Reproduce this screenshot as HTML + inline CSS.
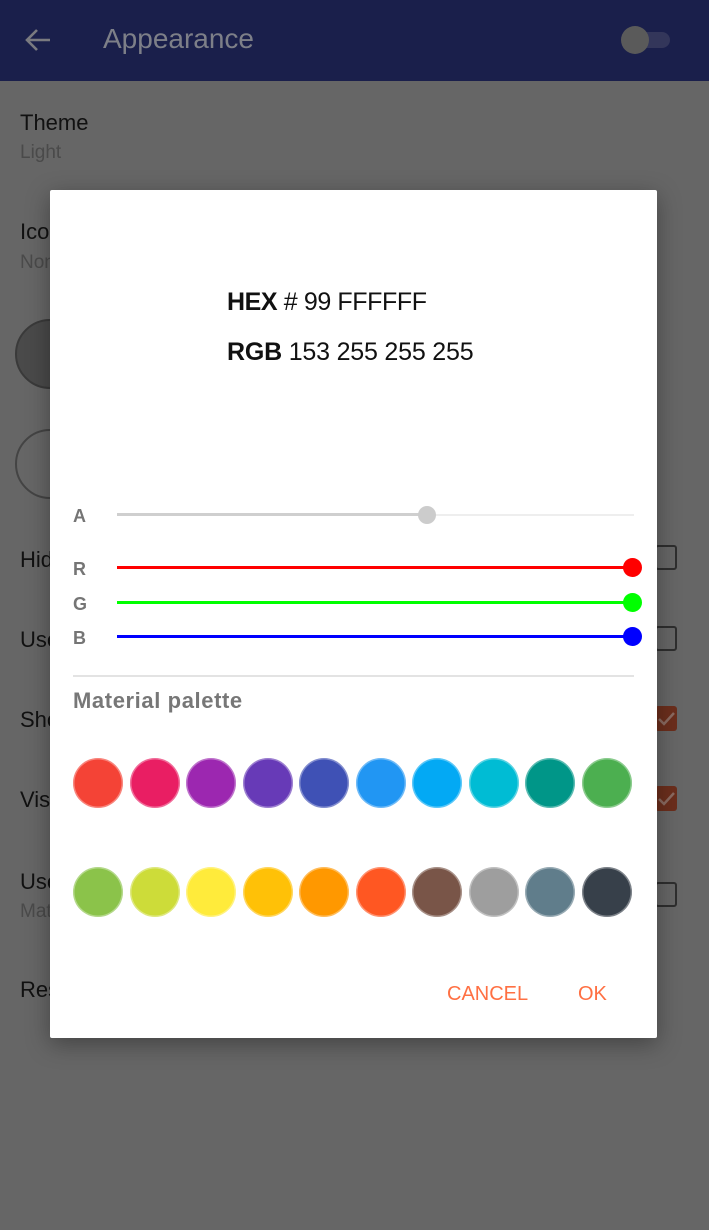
<!DOCTYPE html>
<html><head><style>
*{margin:0;padding:0;box-sizing:border-box}
body{width:709px;height:1230px;background:#666;position:relative;overflow:hidden;font-family:"Liberation Sans",sans-serif}
.a{position:absolute;white-space:nowrap}
.bg{color:#111;font-size:22px}
.sub{color:#4a4a4a;font-size:19px}
.cb{position:absolute;left:655px;width:22px;height:25px;border:2.5px solid #2e2e2e;border-radius:3px}
.cbo{position:absolute;left:655px;width:22px;height:25px;background:#6b2e1c;border-radius:3px}
.lbl{color:#757575;font-size:18px;font-weight:bold}
.dot{position:absolute;width:50px;height:50px;border-radius:50%;box-shadow:inset 0 0 0 1.5px rgba(255,255,255,.35)}
</style></head><body>
<div class="a" style="left:0;top:0;width:709px;height:81px;background:#1a1f4b"></div>
<svg class="a" style="left:24px;top:27px" width="28" height="28" viewBox="0 0 28 28"><path d="M26 13H4M13 3L3 13l10 10" stroke="#7a7a80" stroke-width="2.6" fill="none"/></svg>
<div class="a" style="left:103px;top:23px;font-size:28px;color:#7d7f88">Appearance</div>
<div class="a" style="left:628px;top:32px;width:42px;height:16px;border-radius:8px;background:#33365a"></div>
<div class="a" style="left:621px;top:26px;width:28px;height:28px;border-radius:50%;background:#5a5a5a"></div>

<div class="a bg" style="left:20px;top:110px">Theme</div>
<div class="a sub" style="left:20px;top:142px">Light</div>
<div class="a bg" style="left:20px;top:219px">Icon</div>
<div class="a sub" style="left:20px;top:252px">None</div>
<div class="a" style="left:15px;top:319px;width:70px;height:70px;border-radius:50%;background:#4a4a4a;border:2px solid #3a3a3a"></div>
<div class="a" style="left:15px;top:429px;width:70px;height:70px;border-radius:50%;border:2px solid #444"></div>
<div class="a bg" style="left:20px;top:547px">Hide</div>
<div class="a bg" style="left:20px;top:627px">Use</div>
<div class="a bg" style="left:20px;top:707px">Show</div>
<div class="a bg" style="left:20px;top:787px">Visible</div>
<div class="a bg" style="left:20px;top:869px">Use</div>
<div class="a sub" style="left:20px;top:901px">Material</div>
<div class="a bg" style="left:20px;top:977px">Reset</div>
<div class="cb" style="top:545px"></div>
<div class="cb" style="top:626px"></div>
<div class="cbo" style="top:706px"><svg width="22" height="25"><path d="M4 13l5 5 10-11" stroke="#8a6a60" stroke-width="2.5" fill="none"/></svg></div>
<div class="cbo" style="top:786px"><svg width="22" height="25"><path d="M4 13l5 5 10-11" stroke="#8a6a60" stroke-width="2.5" fill="none"/></svg></div>
<div class="cb" style="top:882px"></div>

<div class="a" style="left:50px;top:190px;width:607px;height:848px;background:#fff;border-radius:2px;box-shadow:0 6px 24px rgba(0,0,0,.35)"></div>
<div class="a" style="left:227px;top:288px;font-size:25px;color:#111;letter-spacing:-0.4px"><b>HEX</b> # 99 FFFFFF</div>
<div class="a" style="left:227px;top:338px;font-size:25px;color:#111;letter-spacing:-0.2px"><b>RGB</b> 153 255 255 255</div>

<div class="a lbl" style="left:73px;top:506px">A</div>
<div class="a" style="left:117px;top:513px;width:310px;height:3px;background:#cfcfcf"></div>
<div class="a" style="left:427px;top:514px;width:207px;height:2px;background:#eee"></div>
<div class="a" style="left:418px;top:506px;width:18px;height:18px;border-radius:50%;background:#ccc"></div>
<div class="a lbl" style="left:73px;top:559px">R</div>
<div class="a" style="left:117px;top:566px;width:515px;height:3px;background:#f00"></div>
<div class="a" style="left:623px;top:558px;width:19px;height:19px;border-radius:50%;background:#f00"></div>
<div class="a lbl" style="left:73px;top:594px">G</div>
<div class="a" style="left:117px;top:601px;width:515px;height:3px;background:#0f0"></div>
<div class="a" style="left:623px;top:593px;width:19px;height:19px;border-radius:50%;background:#0f0"></div>
<div class="a lbl" style="left:73px;top:628px">B</div>
<div class="a" style="left:117px;top:635px;width:515px;height:3px;background:#00f"></div>
<div class="a" style="left:623px;top:627px;width:19px;height:19px;border-radius:50%;background:#00f"></div>
<div class="a" style="left:73px;top:675px;width:561px;height:2px;background:#e3e3e3"></div>
<div class="a" style="left:73px;top:688px;font-size:22px;font-weight:bold;color:#777;letter-spacing:0.6px">Material palette</div>

<div class="dot" style="left:73px;top:758px;background:#f44336"></div>
<div class="dot" style="left:130px;top:758px;background:#e91e63"></div>
<div class="dot" style="left:186px;top:758px;background:#9c27b0"></div>
<div class="dot" style="left:243px;top:758px;background:#673ab7"></div>
<div class="dot" style="left:299px;top:758px;background:#3f51b5"></div>
<div class="dot" style="left:356px;top:758px;background:#2196f3"></div>
<div class="dot" style="left:412px;top:758px;background:#03a9f4"></div>
<div class="dot" style="left:469px;top:758px;background:#00bcd4"></div>
<div class="dot" style="left:525px;top:758px;background:#009688"></div>
<div class="dot" style="left:582px;top:758px;background:#4caf50"></div>

<div class="dot" style="left:73px;top:867px;background:#8bc34a"></div>
<div class="dot" style="left:130px;top:867px;background:#cddc39"></div>
<div class="dot" style="left:186px;top:867px;background:#ffeb3b"></div>
<div class="dot" style="left:243px;top:867px;background:#ffc107"></div>
<div class="dot" style="left:299px;top:867px;background:#ff9800"></div>
<div class="dot" style="left:356px;top:867px;background:#ff5722"></div>
<div class="dot" style="left:412px;top:867px;background:#795548"></div>
<div class="dot" style="left:469px;top:867px;background:#9e9e9e"></div>
<div class="dot" style="left:525px;top:867px;background:#607d8b"></div>
<div class="dot" style="left:582px;top:867px;background:#37404a"></div>

<div class="a" style="left:447px;top:983px;font-size:20px;color:#ff7043">CANCEL</div>
<div class="a" style="left:578px;top:983px;font-size:20px;color:#ff7043">OK</div>
</body></html>
